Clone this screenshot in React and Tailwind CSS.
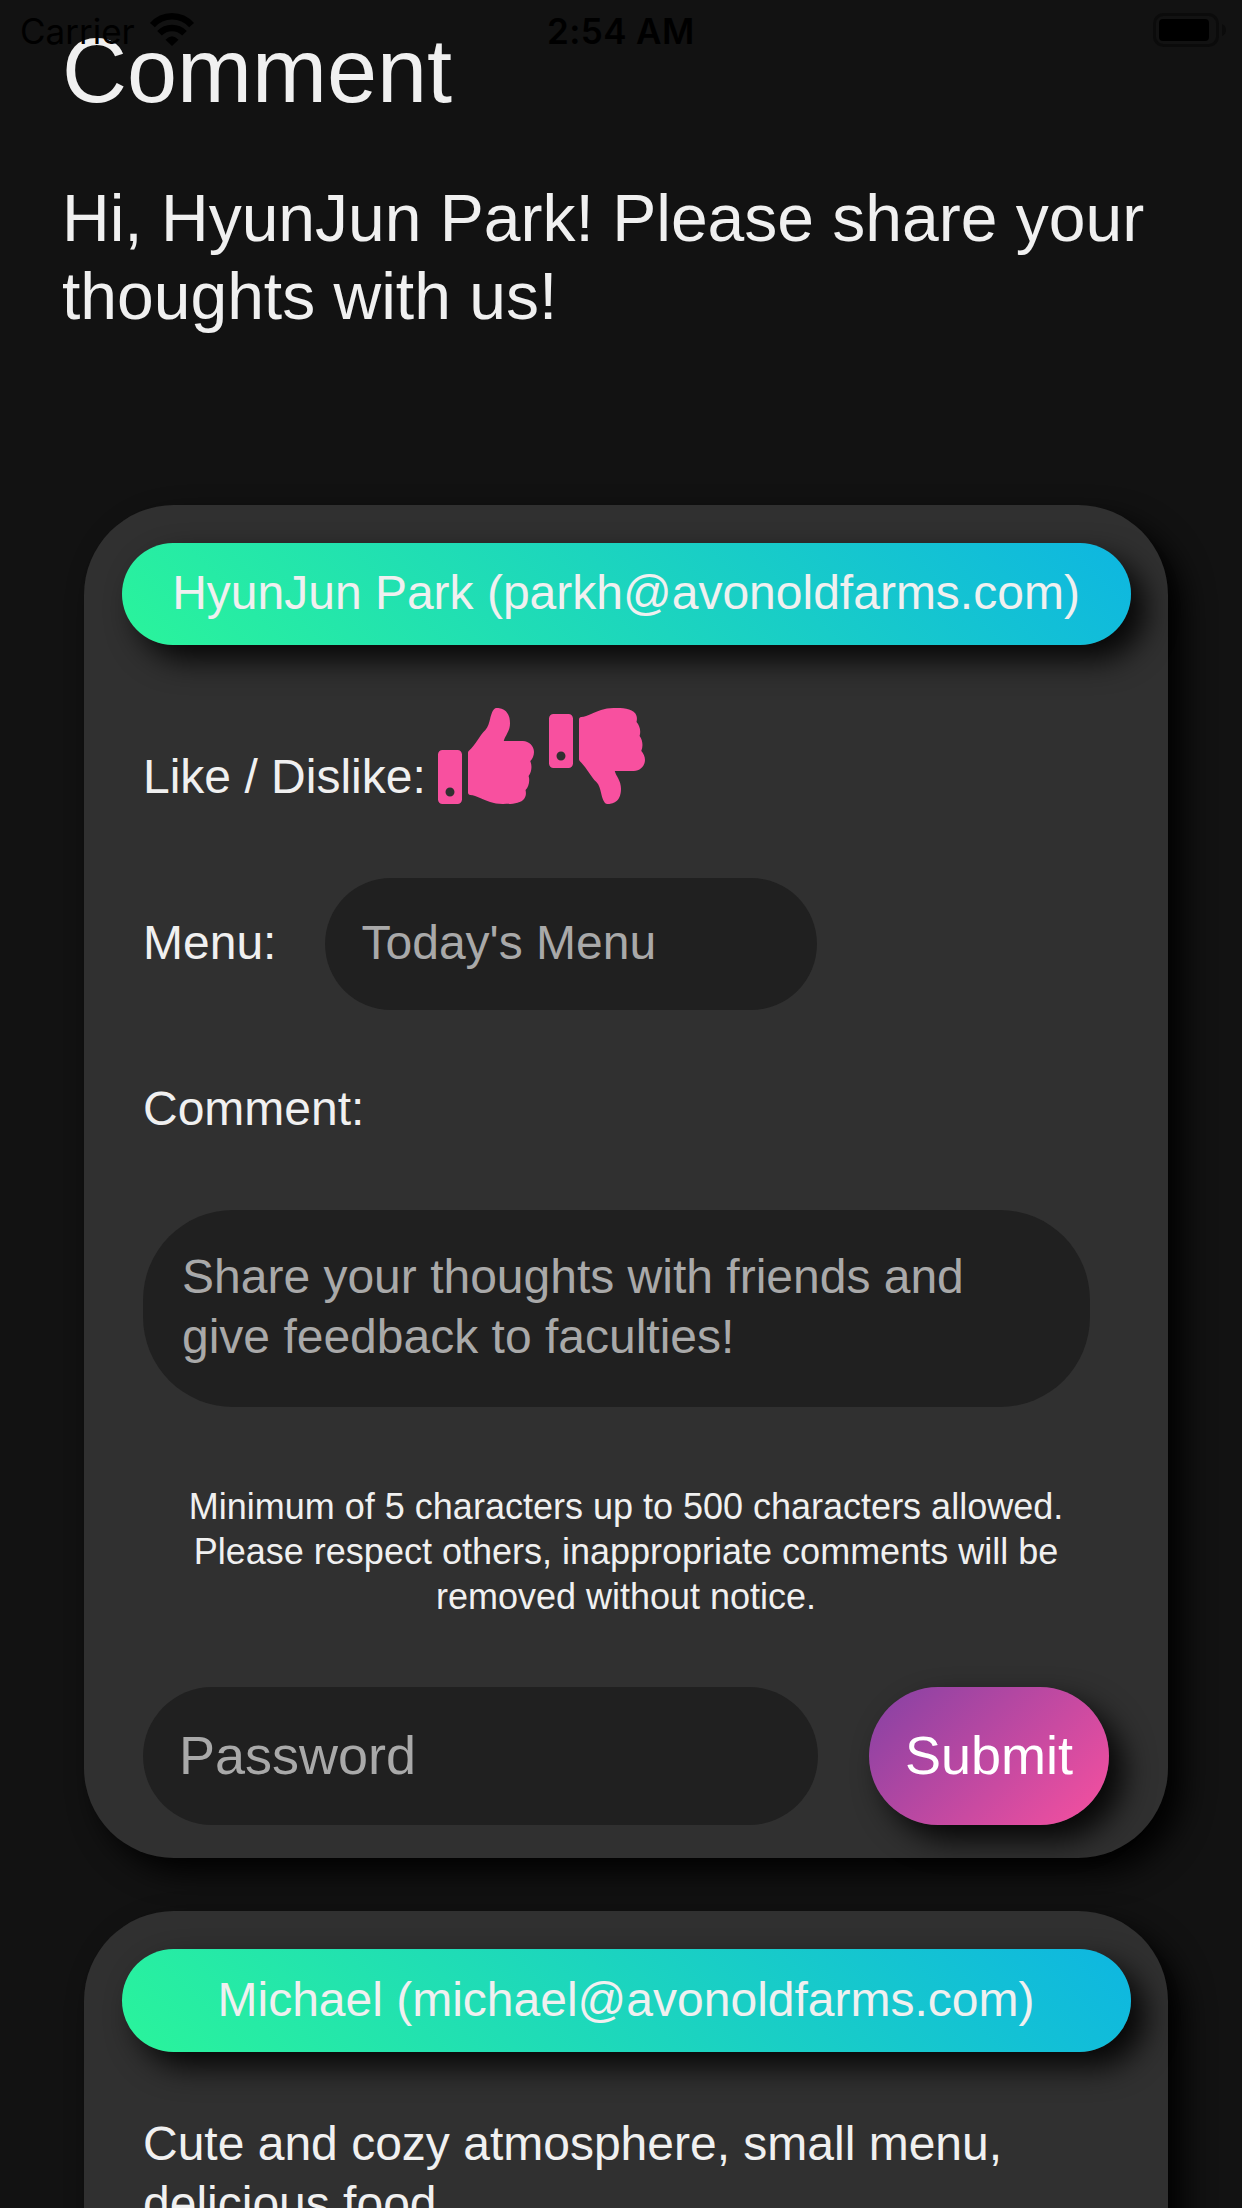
import React from "react";
import { FaThumbsUp, FaThumbsDown } from "react-icons/fa";

function StatusBar() {
  return (
    <div className="absolute inset-x-0 top-0 z-10 h-[60px] font-[Inter] text-black">
      <span className="absolute left-[20px] top-[11px] text-[35px] leading-[40px]">Carrier</span>
      <svg className="absolute left-[148px] top-[12px]" width="48" height="36" viewBox="0 0 48 36">
        <path d="M24 34 L17.500 27.700 Q24 20.700 30.500 27.700 Z" />
        <path d="M11.500 21.300 A17.600 17.600 0 0 1 36.500 21.300" fill="none" stroke="black" strokeWidth="6.500" />
        <path d="M4.400 13.200 A26 26 0 0 1 43.600 13.200" fill="none" stroke="black" strokeWidth="6.500" />
      </svg>
      <span className="absolute left-[547px] top-[11px] text-[35px] font-semibold leading-[40px] tracking-[0.4px]">2:54 AM</span>
      <svg className="absolute left-[1152px] top-[12px]" width="76" height="36" viewBox="0 0 76 36">
        <rect x="2.500" y="2.500" width="63" height="31" rx="9" fill="none" stroke="#0b0b0b" strokeWidth="3" />
        <rect x="7" y="7" width="50" height="22" rx="4" fill="black" />
        <path d="M70 12 Q74 14 74 18 Q74 22 70 24 Z" fill="#0b0b0b" />
      </svg>
    </div>
  );
}

function Card({ title, className, titleHeight = "h-[102px]", children }) {
  return (
    <section className={"w-[1084px] rounded-[90px] bg-[#303030] px-[38px] pt-[38px] shadow-[15px_15px_30px_rgba(0,0,0,0.95)] " + className}>
      <h2
        className={
          "flex w-[1009px] items-center justify-center rounded-[52px] bg-[linear-gradient(45deg,#2af49b,#0eb6e1)] pb-[2px] pr-[1px] text-[48px] leading-[60px] shadow-[15px_15px_30px_rgba(0,0,0,0.87)] " +
          titleHeight
        }
      >
        {title}
      </h2>
      {children}
    </section>
  );
}

export default function App() {
  return (
    <main className="relative h-[2208px] w-[1242px] overflow-hidden bg-[#121212] font-['Liberation_Sans',Arial,sans-serif] text-[#f0f0f0]">
      <StatusBar />
      <header className="h-[505px] px-[62px] pt-[20px]">
        <h1 className="text-[90px] leading-[102px]">Comment</h1>
        <p className="mt-[57px] text-[66px] leading-[78px]">
          Hi, HyunJun Park! Please share your
          <br />
          thoughts with us!
        </p>
      </header>
      <div className="flex flex-col gap-[53px] pl-[84px] text-[48px] leading-[60px]">
        <Card title="HyunJun Park (parkh@avonoldfarms.com)" className="h-[1353px]">
          <div className="ml-[21px] mt-[63px] flex h-[96px]">
            <span className="mt-[39px] w-[295px] whitespace-nowrap">Like / Dislike:</span>
            <FaThumbsUp className="size-[96px] text-[#f8509f]" />
            <FaThumbsDown className="ml-[15px] size-[96px] text-[#f8509f]" />
          </div>
          <div className="ml-[21px] mt-[74px] flex h-[132px] items-center">
            <label className="w-[182px] pb-[2px]">Menu:</label>
            <div className="flex h-[132px] w-[492px] items-center rounded-[66px] bg-[#202020] px-[36.500px] pb-[2px] text-[#a9a9a9]">
              Today's Menu
            </div>
          </div>
          <div className="ml-[21px] mt-[69px]">Comment:</div>
          <div className="ml-[21px] mt-[71px] h-[197px] w-[947px] rounded-[90px] bg-[#202020] px-[39px] pt-[37px] text-[#a9a9a9]">
            Share your thoughts with friends and
            <br />
            give feedback to faculties!
          </div>
          <p className="mt-[77px] w-[1008px] text-center text-[36px] leading-[45px]">
            Minimum of 5 characters up to 500 characters allowed.
            <br />
            Please respect others, inappropriate comments will be
            <br />
            removed without notice.
          </p>
          <div className="ml-[21px] mt-[68px] flex gap-[51px] text-[54px]">
            <div className="flex h-[138px] w-[675px] items-center rounded-[69px] bg-[#202020] px-[36px] pb-[2px] text-[#a9a9a9]">
              Password
            </div>
            <button className="h-[138px] w-[240px] rounded-[69px] bg-[linear-gradient(135deg,#8441a4,#f8509f)] pb-[2px] text-white shadow-[15px_15px_30px_rgba(0,0,0,0.87)]">
              Submit
            </button>
          </div>
        </Card>
        <Card title="Michael (michael@avonoldfarms.com)" className="h-[420px]" titleHeight="h-[103px]">
          <p className="ml-[21px] mt-[62px]">
            Cute and cozy atmosphere, small menu,
            <br />
            delicious food.
          </p>
        </Card>
      </div>
    </main>
  );
}
